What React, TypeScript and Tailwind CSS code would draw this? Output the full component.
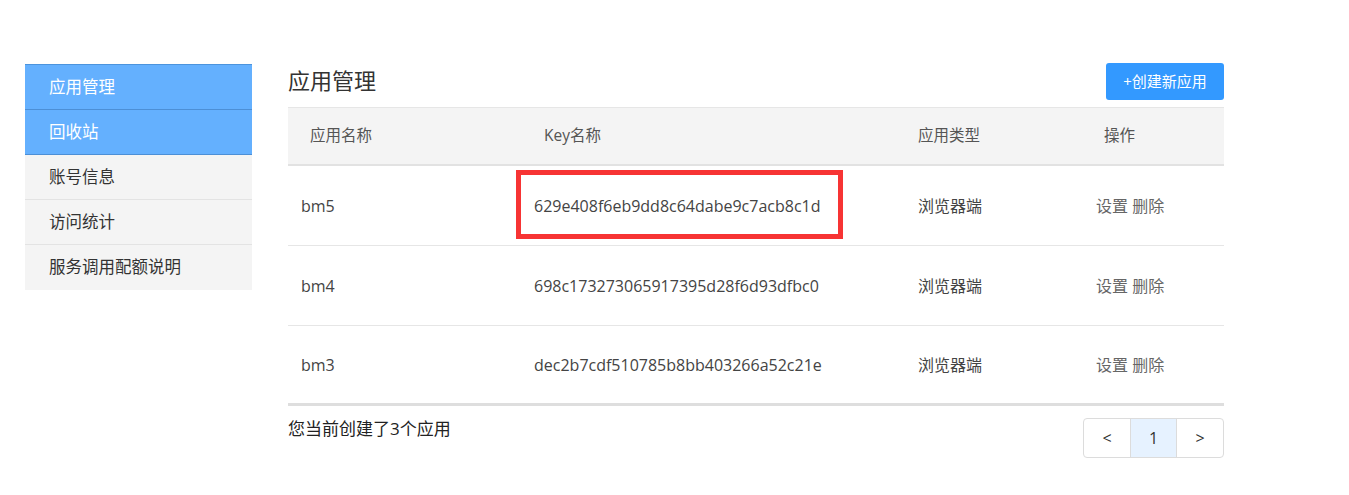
import React from "react";

const menu = [
  { label: "应用管理", active: true },
  { label: "回收站", active: true },
  { label: "账号信息", active: false },
  { label: "访问统计", active: false },
  { label: "服务调用配额说明", active: false },
];

const apps = [
  { name: "bm5", key: "629e408f6eb9dd8c64dabe9c7acb8c1d", type: "浏览器端", marked: true },
  { name: "bm4", key: "698c173273065917395d28f6d93dfbc0", type: "浏览器端", marked: false },
  { name: "bm3", key: "dec2b7cdf510785b8bb403266a52c21e", type: "浏览器端", marked: false },
];

export default function App() {
  return (
    <div
      className="w-[1349px] h-[495px] bg-white text-[#333] flex items-start pt-[64px]"
      style={{ fontFamily: '"Open Sans", "Noto Sans CJK SC", sans-serif' }}
    >
      {/* Sidebar */}
      <ul className="ml-[25px] w-[227px] shrink-0 border-t border-[#4c94dd]">
        {menu.map((m, i) => (
          <li
            key={m.label}
            className={`h-[45px] flex items-center pl-[24px] text-[16.5px] ${
              m.active
                ? "bg-[#64b0fe] text-white border-b border-[#4c8fd6]"
                : "bg-[#f4f4f4] text-[#333] border-b border-[#e3e3e3]"
            } ${i === menu.length - 1 ? "border-b-0" : ""}`}
          >
            {m.label}
          </li>
        ))}
      </ul>

      {/* Main */}
      <div className="ml-[36px] w-[936px] flex flex-col">
        <div className="flex justify-between items-start h-[43px]">
          <h2 className="text-[22px] leading-[32px] text-[#333]">应用管理</h2>
          <button className="h-[37px] w-[118px] -mt-[1px] rounded-[3px] bg-[#3399ff] text-white text-[15px]">
            +创建新应用
          </button>
        </div>

        {/* Table */}
        <div className="border-t border-[#e6e6e6]">
          <div className="h-[58px] bg-[#f4f4f4] border-b-2 border-[#e2e2e2] flex items-center text-[15.5px] text-[#555]">
            <div className="w-[256px] pl-[22px]">应用名称</div>
            <div className="w-[374px]">Key名称</div>
            <div className="w-[186px]">应用类型</div>
            <div>操作</div>
          </div>
          {apps.map((a, i) => (
            <div
              key={a.name}
              className={`relative h-[80px] flex items-center text-[16px] text-[#444] ${
                i === apps.length - 1 ? "border-b-[3px] border-[#dedede]" : "border-b border-[#e6e6e6]"
              }`}
            >
              <div className="w-[246px] pl-[13px]">{a.name}</div>
              <div className="relative w-[384px]">
                {a.key}
                {/* highlight box drawn over the key */}
                {a.marked && (
                  <div className="absolute -left-[18px] -top-[24px] w-[327px] h-[69px] border-[5px] border-[#f73434]" />
                )}
              </div>
              <div className="w-[178px]">{a.type}</div>
              <div className="text-[#666]">设置 删除</div>
            </div>
          ))}
        </div>

        {/* Footer */}
        <div className="flex justify-between items-start mt-[10px]">
          <p className="text-[17px] text-[#222] leading-[24px] mt-[1px]">您当前创建了3个应用</p>
          <div className="flex h-[40px] mt-[2px] border border-[#dcdcdc] rounded-[4px] overflow-hidden text-[16px] text-[#333]">
            <button className="w-[46px] flex items-center justify-center">&lt;</button>
            <button className="w-[47px] flex items-center justify-center bg-[#e6f2ff] border-x border-[#dcdcdc]">1</button>
            <button className="w-[46px] flex items-center justify-center">&gt;</button>
          </div>
        </div>
      </div>
    </div>
  );
}
